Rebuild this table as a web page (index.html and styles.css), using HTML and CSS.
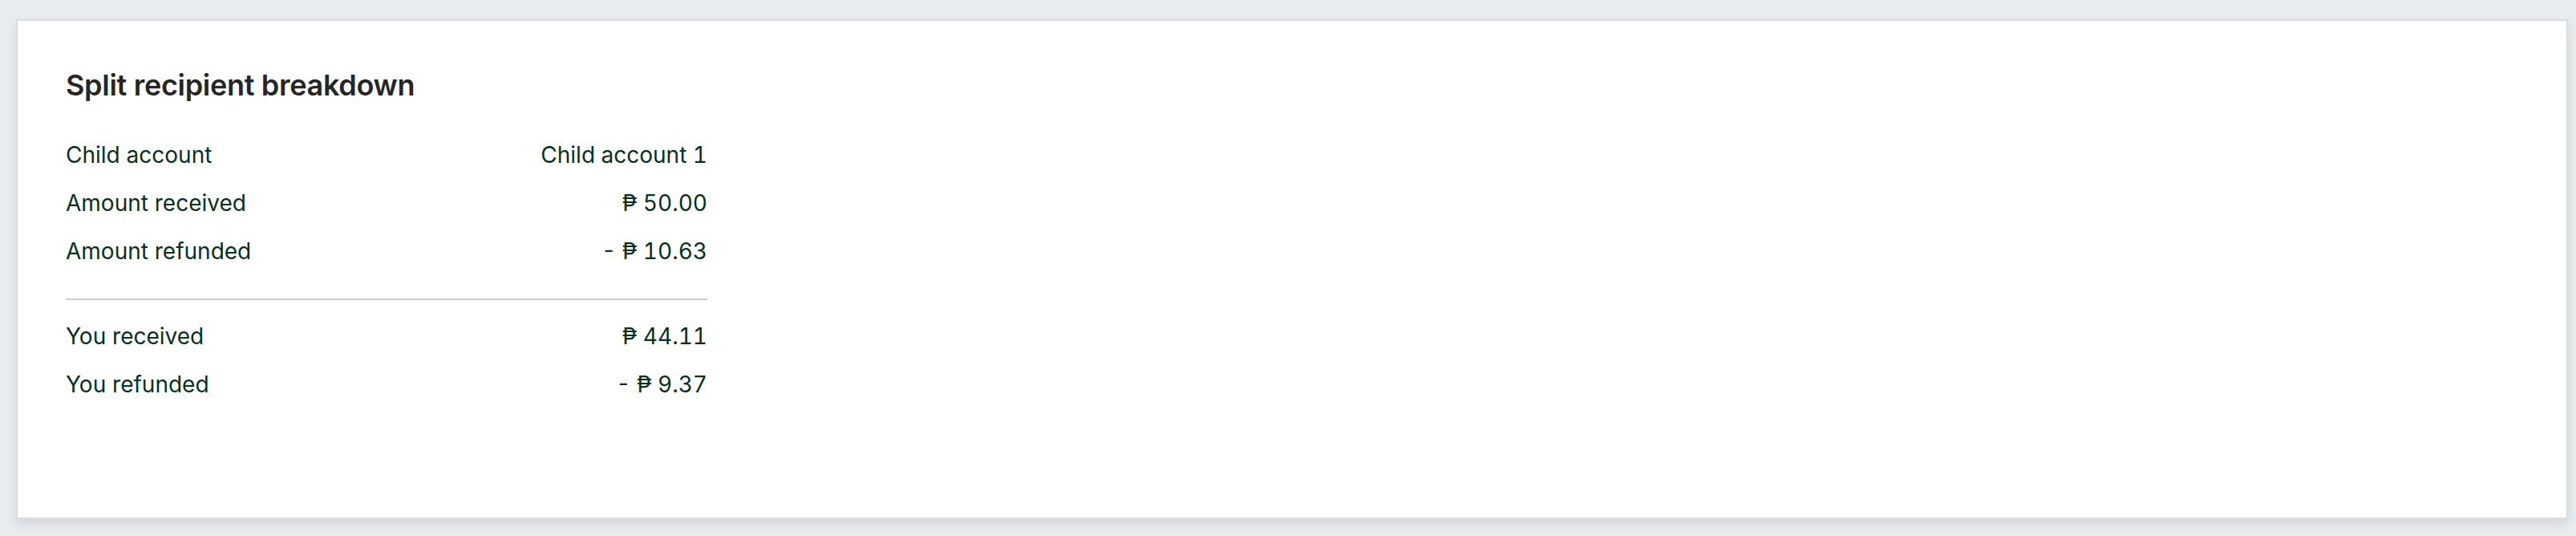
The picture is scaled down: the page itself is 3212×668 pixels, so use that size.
FILE: index.html
```html
<!DOCTYPE html>
<html lang="en">
<head>
<meta charset="utf-8">
<title>Split recipient breakdown</title>
<link rel="stylesheet" href="styles.css">
</head>
<body>
  <section class="card">
    <h2 class="card-title">Split recipient breakdown</h2>
    <div class="breakdown">
      <div class="group">
        <div class="row"><span class="label">Child account</span><span class="value">Child account 1</span></div>
        <div class="row"><span class="label">Amount received</span><span class="value">₱ 50.00</span></div>
        <div class="row"><span class="label">Amount refunded</span><span class="value">- ₱ 10.63</span></div>
      </div>
      <hr class="divider">
      <div class="group">
        <div class="row"><span class="label">You received</span><span class="value">₱ 44.11</span></div>
        <div class="row"><span class="label">You refunded</span><span class="value">- ₱ 9.37</span></div>
      </div>
    </div>
  </section>
</body>
</html>
```
FILE: styles.css
```css
html, body {
  margin: 0;
  padding: 0;
  background: #e8edf1;
}
body {
  padding: 24px 10px 21px 20px;
  font-family: Inter, "Liberation Sans", sans-serif;
}
.card {
  background: #ffffff;
  border: 2px solid #dcdcdc;
  box-shadow: 0 6px 12px rgba(60, 70, 80, 0.14);
  padding: 56px 60px 146px 60px;
}
.card-title {
  margin: 0;
  font-size: 36px;
  line-height: 48px;
  font-weight: 600;
  color: #262626;
  letter-spacing: -0.3px;
}
.breakdown {
  width: 800px;
  margin-top: 43px;
}
.group {
  display: flex;
  flex-direction: column;
  gap: 20px;
}
.row {
  display: flex;
  justify-content: space-between;
  font-size: 28px;
  line-height: 40px;
  color: #06301f;
}
.value {
  font-variant-numeric: tabular-nums;
}
.divider {
  border: 0;
  height: 2px;
  background: #c9ccd6;
  margin: 39px 0 25px 0;
}
```
